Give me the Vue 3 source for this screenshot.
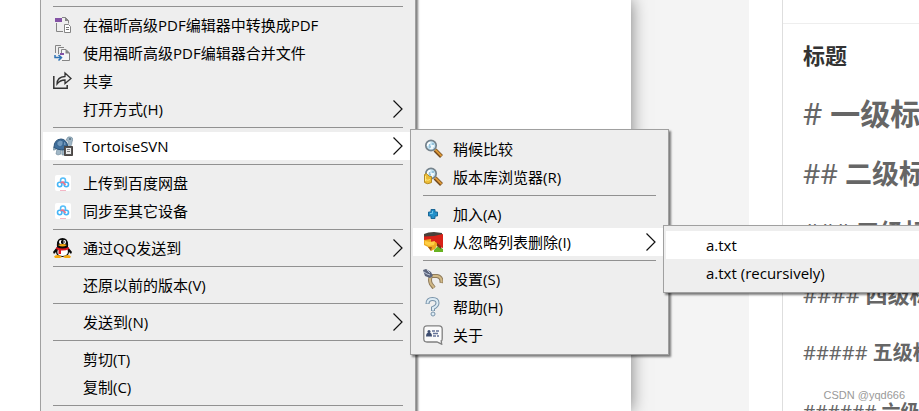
<script setup>
const mainMenu = [
  { sep: true },
  { label: '在福昕高级PDF编辑器中转换成PDF', icon: 'convert' },
  { label: '使用福昕高级PDF编辑器合并文件', icon: 'merge' },
  { label: '共享', icon: 'share' },
  { label: '打开方式(H)', arrow: true },
  { sep: true },
  { label: 'TortoiseSVN', icon: 'tortoise', arrow: true, active: true, open: 'svn' },
  { sep: true },
  { label: '上传到百度网盘', icon: 'netdisk' },
  { label: '同步至其它设备', icon: 'netdisk' },
  { sep: true },
  { label: '通过QQ发送到', icon: 'qq', arrow: true },
  { sep: true },
  { label: '还原以前的版本(V)' },
  { sep: true },
  { label: '发送到(N)', arrow: true },
  { sep: true },
  { label: '剪切(T)' },
  { label: '复制(C)' },
  { sep: true },
]

const svnMenu = [
  { label: '稍候比较', icon: 'search' },
  { label: '版本库浏览器(R)', icon: 'repo' },
  { sep: true },
  { label: '加入(A)', icon: 'add' },
  { label: '从忽略列表删除(I)', icon: 'ignore', arrow: true, active: true, open: 'ignore' },
  { sep: true },
  { label: '设置(S)', icon: 'settings' },
  { label: '帮助(H)', icon: 'help' },
  { label: '关于', icon: 'about' },
]

const ignoreMenu = [
  { label: 'a.txt', active: true },
  { label: 'a.txt (recursively)' },
]

const headings = [
  { level: 1, text: '一级标题' },
  { level: 2, text: '二级标题' },
  { level: 3, text: '三级标题' },
  { level: 4, text: '四级标题' },
  { level: 5, text: '五级标题' },
  { level: 6, text: '六级标题' },
]
</script>

<template>
  <div class="desktop">
    <div class="backdrop">
      <div class="window"></div>
      <div class="gutter"></div>
      <main class="page">
        <article class="article">
          <div class="article-top"></div>
          <h2 class="title">标题</h2>
          <p v-for="h in headings" :key="h.level" class="heading" :class="`heading--${h.level}`">
            <span>{{ '#'.repeat(h.level) }}</span> <strong>{{ h.text }}</strong>
          </p>
        </article>
      </main>
    </div>

    <ul class="menu menu--main">
      <li v-for="(item, i) in mainMenu" :key="i" :class="item.sep ? 'sep' : 'row'">
        <button v-if="!item.sep" type="button" class="item" :class="{ 'item--active': item.active }">
          <span class="icon">
            <svg v-if="item.icon === 'convert'" width="20" height="20" viewBox="0 0 20 20">
              <path d="M3.500 8v8.500H10M9 2.500h3.500l3 3v3" fill="none" stroke="#858585" />
              <path d="M12 2v4h4z" fill="#858585" />
              <path d="M2 3h7v4H2z" fill="#8453a5" />
              <path d="M11.500 9.500h4l2 2v6h-6z" fill="#fff" stroke="#858585" />
              <path d="M13 12.500h3M13 14.500h3" stroke="#777" />
            </svg>
            <svg v-else-if="item.icon === 'merge'" width="20" height="20" viewBox="0 0 20 20">
              <path d="M2.500 10V2.500H8M5.500 11V4.500H11" fill="none" stroke="#858585" />
              <path d="M8.500 12V6.500H13l3.500 3.500v7.500H9" fill="#f6f6f6" stroke="#858585" />
              <path d="M12.500 6v4.500H17z" fill="#858585" />
              <path d="M7 10h4v2H7z" fill="#8453a5" />
              <path d="M2 12v2.500h6M5.500 12l3 2.500-3 3" fill="none" stroke="#2f73b5" stroke-width="1.500" />
            </svg>
            <svg v-else-if="item.icon === 'share'" width="20" height="20" viewBox="0 0 20 20">
              <path d="M.8 5v12.200h13.400V14" fill="none" stroke="#333" stroke-width="1.500" />
              <path d="M4 13q0-7 8-7.500V2l6 5.500-6 5V9q-5 0-8 4z" fill="none" stroke="#333" stroke-width="1.300" />
            </svg>
            <svg v-else-if="item.icon === 'tortoise'" width="20" height="20" viewBox="0 0 20 20">
              <path d="M13 9q3-1 2-4l-2-1 2-3q4-1 5 2l-1 3q0 5-5 7zM4 13h4v5l-3 1-2-1zM9 14h4v5H9zM0 11l4 1-2 2H0z" fill="#a0b7c6" stroke="#6d8798" stroke-width=".6" />
              <path d="M1 11.500q0-8 7-8.500 6 0 7 9-6 4-14-.5z" fill="#3f6f9d" stroke="#2d5378" />
              <path d="m4 6 3-2 3 1v4l-3 2-3-2zM11 5l2 2v3l-3-1z" fill="#7199bd" stroke="#2f5c87" stroke-width=".7" />
              <circle cx="17" cy="3" r=".8" fill="#24394a" />
              <path d="M11.500 10.500h8v9h-8z" fill="#555" stroke="#4b4543" />
              <path d="M13 12h5v6h-5z" fill="#eee" />
              <path d="M14 13.500h3M14 15.500h3" stroke="#888" />
            </svg>
            <svg v-else-if="item.icon === 'netdisk'" width="20" height="20" viewBox="0 0 20 20">
              <rect x="2" y="2" width="16" height="16" rx="2" fill="#fff" />
              <circle cx="10" cy="7.500" r="2.500" fill="none" stroke="#55bdf8" stroke-width="1.500" />
              <circle cx="6.700" cy="11.500" r="2.200" fill="none" stroke="#45b5f7" stroke-width="1.600" />
              <circle cx="13.300" cy="11.500" r="2.200" fill="none" stroke="#45b5f7" stroke-width="1.600" />
              <path d="m7.500 9.700 2.500-.7 2.500 3" fill="none" stroke="#f27388" stroke-width="1.600" />
              <path d="M7 17.500h6" stroke="#f3b6c5" />
            </svg>
            <svg v-else-if="item.icon === 'qq'" width="20" height="20" viewBox="0 0 20 20">
              <path d="M4 9q-1-9 5.500-9T15 9l4 5-1 2-2-2q0 5-6.500 5T3 14l-2 2-1-2z" fill="#090909" />
              <path d="M5 11h9.500q2 7-5 7T5 11z" fill="#fff" />
              <ellipse cx="7.500" cy="4" rx="1.500" ry="2" fill="#fff" />
              <ellipse cx="11.500" cy="4" rx="1.500" ry="2" fill="#fff" />
              <path d="M8 3h1v2H8zM10.500 3h1v2h-1z" fill="#000" />
              <path d="M5 7q4.500-2 9 0-4.500 3-9 0zM1 18.500q4-3 8 .5l-2 1H2zM18 18.500q-4-3-8 .5l2 1h5z" fill="#f7aa10" />
              <path d="M3.500 9q6 3 12 0l.5 2q-4 2-8 1.500V16H5.500v-4L3 11z" fill="#df141d" />
            </svg>
          </span>
          <span class="label">{{ item.label }}</span>
          <svg v-if="item.arrow" class="arrow" width="10" height="18" viewBox="0 0 10 18">
            <path d="m.5.5 8.500 8.500-8.500 8.500" />
          </svg>
        </button>

        <ul v-if="item.open === 'svn'" class="menu menu--svn">
          <li v-for="(sub, j) in svnMenu" :key="j" :class="sub.sep ? 'sep' : 'row'">
            <button v-if="!sub.sep" type="button" class="item" :class="{ 'item--active': sub.active }">
              <span class="icon">
                <svg v-if="sub.icon === 'search' || sub.icon === 'repo'" width="20" height="20" viewBox="0 0 20 20">
                  <path d="m12 11 6.500 6.500" stroke="#70481d" stroke-width="4" />
                  <path d="m12 10.500 6.500 6.500" stroke="#dc9838" stroke-width="2" />
                  <circle cx="8" cy="6.500" r="5.200" fill="#c3e3f3" stroke="#75828b" stroke-width="1.700" />
                  <path d="M4.500 7q0-3 3-3.500M8 7h3M7 9h3" fill="none" stroke="#fff" stroke-width="1.300" />
                  <path d="M6 6h1M9 5h2M6 8h2" stroke="#6aa2c2" />
                  <template v-if="sub.icon === 'repo'">
                    <path d="M1.500 7.500q2-2 3 0l2 2h2v6q-4 2.500-7 0z" fill="#edbd36" stroke="#b38a28" />
                    <path d="M2.500 9v5M2 12.500q3 1.500 5 0" fill="none" stroke="#ffe982" />
                  </template>
                </svg>
                <svg v-else-if="sub.icon === 'add'" width="20" height="20" viewBox="0 0 20 20">
                  <path d="M8 5.500h4V8h2.500v4H12v2.500H8V12H5.500V8H8z" fill="#2391cb" stroke="#1b6796" stroke-linejoin="round" />
                  <path d="M9.500 7v2.500H7" fill="none" stroke="#75c8ed" />
                </svg>
                <svg v-else-if="sub.icon === 'ignore'" width="20" height="20" viewBox="0 0 20 20">
                  <path d="M1 7h13l1 5-3 5-4 2-3-4-4-2z" fill="#edaa22" />
                  <path d="M1 2q4-2 10-2l8 1v4L7 7 1 5z" fill="#49413a" />
                  <path d="M1 4.500 11 4l9-2v14l-4-1-3-5H8V7L1 8z" fill="#d92218" />
                  <path d="m11 18 4-4 5 3v3h-9z" fill="#68b322" />
                  <path d="m2 9 5 1 5-1-1 4-5 1-4-2z" fill="#ffcf45" />
                  <path d="m14 11 4 3v3l-4-3z" fill="#7b3213" />
                  <path d="M5 15h4l-1 4z" fill="#a65b17" />
                </svg>
                <svg v-else-if="sub.icon === 'settings'" width="20" height="20" viewBox="0 0 20 20">
                  <path d="M8 7q-2 4 0 8l3 4M7 7h7q5 1 4.500 7" fill="none" stroke="#8f7b5b" stroke-width="4" />
                  <path d="M8 7q-2 4 0 8l3 3.500M7 7h7q5 1 4.500 6.500" fill="none" stroke="#d1b987" stroke-width="2" />
                  <path d="m0 1 3-1 5 3 2 4-3 2-5-2z" fill="#5c657d" />
                  <path d="m1 3 3 2 3 1M4 1l3 3" fill="none" stroke="#bdc7da" />
                </svg>
                <svg v-else-if="sub.icon === 'help'" width="20" height="20" viewBox="0 0 20 20">
                  <path d="M4.500 7q0-5 5-5t5 4q0 3-4.500 5v3" fill="none" stroke="#7893a9" stroke-width="4" />
                  <path d="M4.500 6.500q0-4.500 5-4.500t5 4q0 3-4.500 5v2.500" fill="none" stroke="#dcebf4" stroke-width="2" />
                  <circle cx="10" cy="17" r="2" fill="#dcebf4" stroke="#7893a9" />
                </svg>
                <svg v-else-if="sub.icon === 'about'" width="20" height="20" viewBox="0 0 20 20">
                  <path d="M4 .8h12q3.200 0 3.200 3.200v9q0 3-1 3l.5 3.200L14 17H4q-3.200 0-3.200-3.200V4Q.8.800 4 .8z" fill="#fafafa" stroke="#808080" stroke-width="1.300" />
                  <circle cx="6" cy="6.500" r="1.500" fill="#3d4d70" />
                  <path d="M3 11.500q0-4 3-4t3 4z" fill="#3d4d70" />
                  <path d="M9 6h3M13 6h3M10 8.500h5M10 11h3M14 11h2" stroke="#657398" stroke-width="1.300" />
                </svg>
              </span>
              <span class="label">{{ sub.label }}</span>
              <svg v-if="sub.arrow" class="arrow" width="10" height="18" viewBox="0 0 10 18">
                <path d="m.5.5 8.500 8.500-8.500 8.500" />
              </svg>
            </button>

            <ul v-if="sub.open === 'ignore'" class="menu menu--ignore">
              <li v-for="leaf in ignoreMenu" :key="leaf.label" class="row">
                <button type="button" class="item" :class="{ 'item--active': leaf.active }">
                  <span class="icon"></span>
                  <span class="label">{{ leaf.label }}</span>
                </button>
              </li>
            </ul>
          </li>
        </ul>
      </li>
    </ul>

    <div class="watermark">CSDN @yqd666</div>
  </div>
</template>

<style>
body {
  margin: 0;
  overflow: hidden;
}
</style>

<style scoped>
.desktop {
  position: relative;
  height: 100vh;
  overflow: hidden;
  background: #fff;
  font-family: 'Open Sans', 'Noto Sans CJK SC', sans-serif;
}

.backdrop {
  display: flex;
  height: 100%;
}

.window {
  flex: 631 1 0;
  z-index: 1;
  background: #fff;
  box-shadow: 0 0 16px rgba(0, 0, 0, 0.5);
}

.gutter {
  flex: 118 1 0;
  background: #f4f4f4;
}

.page {
  flex: 170 1 0;
  min-width: 0;
}

.article {
  height: 100%;
  margin-left: 33px;
  overflow: hidden;
  border-left: 1px solid #dedede;
  color: #666;
  white-space: nowrap;
}

.article-top {
  height: 23px;
  border-bottom: 1px solid #eee;
}

.title {
  margin: 14px 0 0 20px;
  font-size: 22px;
  line-height: 34px;
  font-weight: 700;
  color: #333;
}

.heading {
  margin: 0 0 0 20px;
  font-family: 'Noto Sans', 'Noto Sans CJK SC', sans-serif;
}

.heading strong {
  font-weight: 700;
}

.heading--1 {
  margin-top: 22px;
  font-size: 30px;
  line-height: 40px;
}

.heading--2 {
  margin-top: 22px;
  font-size: 27px;
  line-height: 36px;
}

.heading--3 {
  margin-top: 24px;
  font-size: 24px;
  line-height: 32px;
}

.heading--4 {
  margin-top: 30px;
  font-size: 22px;
  line-height: 32px;
}

.heading--5 {
  margin-top: 28px;
  font-size: 20px;
  line-height: 30px;
}

.heading--6 {
  margin-top: 30px;
  font-size: 19px;
  line-height: 28px;
}

.menu {
  position: absolute;
  z-index: 2;
  box-sizing: border-box;
  margin: 0;
  padding: 5px 2px;
  list-style: none;
  border: 1px solid #a0a0a0;
  background: #eee;
  box-shadow: 2px 2px 2px rgba(0, 0, 0, 0.5);
}

.menu--main {
  top: -4px;
  bottom: -8px;
  left: 40px;
  width: 376px;
}

/* Flyouts overlap the parent row by 3px, like native menus */
.menu--svn,
.menu--ignore {
  top: -3px;
  left: calc(100% - 3px);
}

.menu--svn {
  width: 259px;
}

.menu--ignore {
  width: 320px;
}

.row {
  position: relative;
}

.sep {
  height: 1px;
  margin: 4px 10px;
  background: #919191;
}

.item {
  display: flex;
  align-items: center;
  width: 100%;
  height: 28px;
  padding: 0 10px;
  border: 0;
  background: transparent;
  color: #000;
  font: inherit;
  font-size: 15px;
  line-height: 20px;
  text-align: left;
  white-space: nowrap;
}

.item--active {
  background: #fff;
}

.icon {
  flex: none;
  width: 20px;
  height: 20px;
  margin-right: 10px;
}

.icon svg {
  display: block;
}

.label {
  flex: 1;
}

.arrow {
  flex: none;
  fill: none;
  stroke: #111;
  stroke-width: 1.2;
}

.watermark {
  position: absolute;
  z-index: 3;
  right: 14px;
  bottom: 7px;
  color: #999;
  font-family: 'Liberation Sans', sans-serif;
  font-size: 11px;
  line-height: 18px;
}
</style>
